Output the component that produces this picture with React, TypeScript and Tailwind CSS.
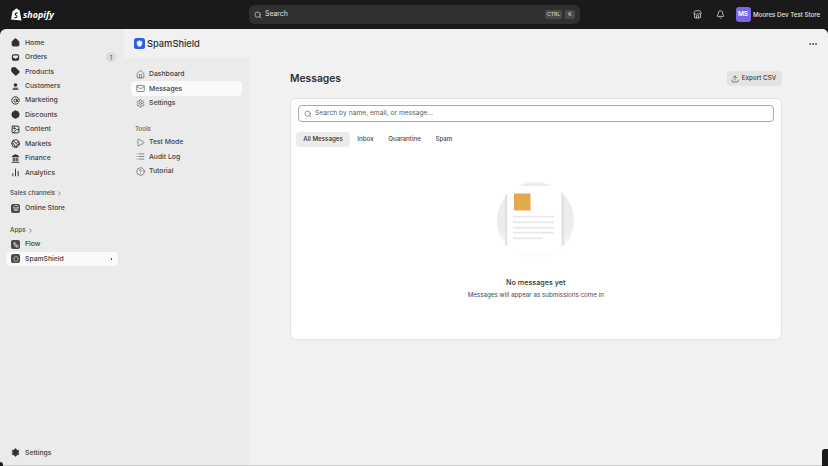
import {
  AtSign,
  BadgePercent,
  Bell,
  ChartNoAxesColumn,
  ChevronRight,
  CircleHelp,
  Earth,
  Ellipsis,
  Home,
  House,
  Image,
  Landmark,
  List,
  Mail,
  Play,
  Search,
  Settings,
  Shield,
  Store,
  Tag,
  Upload,
  Workflow,
  type LucideIcon,
} from "lucide-react";

function OrdersIcon({ className }: { className?: string }) {
  return (
    <svg viewBox="0 0 20 20" className={className}>
      <rect x="2" y="3" width="16" height="14" rx="3.5" fill="#303030" />
      <path d="M4.5 5.5h11v5h-3l-1 2h-3l-1-2h-3z" fill="#ebebeb" />
    </svg>
  );
}

function CustomersIcon({ className }: { className?: string }) {
  return (
    <svg viewBox="0 0 20 20" className={className}>
      <circle cx="10" cy="6.5" r="4" fill="#303030" />
      <path d="M5 12.5h10l1 2.5H4z" fill="#303030" />
      <rect x="3" y="16" width="14" height="2" rx="1" fill="#303030" />
    </svg>
  );
}

const mainNav: { label: string; icon: LucideIcon | typeof OrdersIcon; iconClass: string; badge?: string }[] = [
  { label: "Home", icon: Home, iconClass: "fill-[#303030] text-[#303030]" },
  { label: "Orders", icon: OrdersIcon, iconClass: "", badge: "1" },
  { label: "Products", icon: Tag, iconClass: "fill-[#303030] text-[#303030]" },
  { label: "Customers", icon: CustomersIcon, iconClass: "" },
  { label: "Marketing", icon: AtSign, iconClass: "text-[#303030]" },
  { label: "Discounts", icon: BadgePercent, iconClass: "fill-[#303030] text-[#303030]" },
  { label: "Content", icon: Image, iconClass: "text-[#303030]" },
  { label: "Markets", icon: Earth, iconClass: "text-[#303030]" },
  { label: "Finance", icon: Landmark, iconClass: "fill-[#303030] text-[#303030]" },
  { label: "Analytics", icon: ChartNoAxesColumn, iconClass: "text-[#303030]" },
];

const appNav: { label: string; icon: LucideIcon; active?: boolean }[] = [
  { label: "Dashboard", icon: House },
  { label: "Messages", icon: Mail, active: true },
  { label: "Settings", icon: Settings },
];

const toolNav: { label: string; icon: LucideIcon }[] = [
  { label: "Test Mode", icon: Play },
  { label: "Audit Log", icon: List },
  { label: "Tutorial", icon: CircleHelp },
];

const tabs = ["All Messages", "Inbox", "Quarantine", "Spam"];

function NavRow({ label, icon: Icon, iconClass, badge }: (typeof mainNav)[number]) {
  return (
    <div className="flex h-[14.45px] items-center pl-[5px] pr-[2px]">
      <Icon className={`h-[9px] w-[9px] shrink-0 ${iconClass}`} strokeWidth={2.6} />
      <span className="ml-[5px] flex-1 text-[6.8px] font-medium text-[#404040]">{label}</span>
      {badge && (
        <span className="flex h-[10px] w-[10px] items-center justify-center rounded-full bg-[#dcdcdc] text-[6px] text-[#4a4a4a]">
          {badge}
        </span>
      )}
    </div>
  );
}

function AppIconRow({ label, icon: Icon }: { label: string; icon: LucideIcon }) {
  return (
    <div className="flex h-[14.45px] items-center pl-[5px] pr-[2px]">
      <span className="flex h-[9px] w-[9px] shrink-0 items-center justify-center rounded-[2px] bg-[#4a4a4a]">
        <Icon className="h-[6px] w-[6px] text-[#ebebeb]" strokeWidth={2.5} />
      </span>
      <span className="ml-[5px] flex-1 text-[6.8px] font-medium text-[#404040]">{label}</span>
    </div>
  );
}

function SubNavRow({ label, icon: Icon, active }: { label: string; icon: LucideIcon; active?: boolean }) {
  return (
    <div className={`flex h-[14.45px] items-center rounded-[4px] pl-[5px] ${active ? "bg-[#fafafa]" : ""}`}>
      <Icon className="h-[9px] w-[9px] shrink-0 text-[#4a4a4a]" strokeWidth={1.6} />
      <span className="ml-[4px] text-[6.8px] font-medium text-[#404040]">{label}</span>
    </div>
  );
}

function ShopifyBag() {
  return (
    <svg width="12" height="13" viewBox="0 0 12 13" className="shrink-0">
      <path
        d="M1 11.5 2.6 3.2Q4 2.6 4.5 2 5.2.5 6.6.5 8 .5 8.4 2L9.5 2 11.5 12.5Z"
        fill="#ffffff"
      />
      <path
        d="M7.6 5Q5.5 4.6 5.2 6 5.2 7 6.2 7.4 7.2 8 6.8 9 6 10 4.5 9.4"
        fill="none"
        stroke="#1a1a1a"
        strokeWidth="1.1"
      />
    </svg>
  );
}

function EmptyIllustration() {
  return (
    <svg width="78" height="78" viewBox="0 0 78 78" className="block">
      <defs>
        <linearGradient id="circleFade" x1="0" y1="0" x2="0" y2="1">
          <stop offset="0.6" stopColor="#ececec" />
          <stop offset="1" stopColor="#ffffff" />
        </linearGradient>
      </defs>
      <circle cx="38.5" cy="38.5" r="38.5" fill="url(#circleFade)" />
      <rect x="8.5" y="12" width="1.5" height="52" fill="#dcdcdc" />
      <rect x="65" y="13" width="2" height="50" fill="#e0e0e0" />
      <rect x="10" y="4" width="54" height="66" fill="#ffffff" />
      <rect x="17" y="11.5" width="16.5" height="17" fill="#e4a94f" />
      <rect x="16" y="33.8" width="41" height="1.8" fill="#e8e8e8" />
      <rect x="16" y="39.4" width="41" height="1.8" fill="#e8e8e8" />
      <rect x="16" y="44.8" width="41" height="1.8" fill="#e8e8e8" />
      <rect x="16" y="49.8" width="41" height="1.8" fill="#e8e8e8" />
      <rect x="16" y="55.4" width="30" height="1.8" fill="#e8e8e8" />
    </svg>
  );
}

export default function App() {
  return (
    <div className="relative flex h-[466px] w-[828px] flex-col overflow-hidden bg-[#1a1a1a] font-['Inter',sans-serif]">
      {/* TOP BAR */}
      <header className="flex h-[29px] shrink-0 items-center">
        <div className="flex w-[249px] items-center pl-[10px]">
          <ShopifyBag />
          <span className="ml-[1px] font-['Open_Sans',sans-serif] text-[9px] font-bold italic text-white">shopify</span>
        </div>
        <div className="flex h-[19px] w-[331px] items-center rounded-[6px] bg-[#303030] pl-[5px] pr-[5px]">
          <Search className="h-[8px] w-[8px] text-[#e3e3e3]" strokeWidth={2} />
          <span className="ml-[3px] flex-1 text-[6.9px] text-[#e3e3e3]">Search</span>
          <span className="rounded-[2px] bg-[#4a4a4a] px-[2px] text-[5px] font-medium leading-[9px] text-[#d0d0d0]">CTRL</span>
          <span className="ml-[3px] w-[10px] rounded-[2px] bg-[#4a4a4a] text-center text-[5px] font-medium leading-[9px] text-[#d0d0d0]">K</span>
        </div>
        <div className="flex flex-1 items-center pl-[113px]">
          <Store className="h-[9px] w-[9px] text-[#e3e3e3]" strokeWidth={2} />
          <Bell className="ml-[14px] h-[9px] w-[9px] text-[#e3e3e3]" strokeWidth={2} />
          <span className="ml-[10.5px] flex h-[15px] w-[15px] items-center justify-center rounded-[3px] bg-[#7c66e8] text-[6.5px] font-semibold text-white">MS</span>
          <span className="ml-[2.5px] whitespace-nowrap text-[6.2px] font-medium text-[#e3e3e3]">Moores Dev Test Store</span>
        </div>
      </header>

      {/* BODY */}
      <div className="flex min-h-0 flex-1 overflow-hidden rounded-t-[6px] border-b border-[#c9c9c9] bg-[#ebebeb]">
        <nav className="flex w-[124px] shrink-0 flex-col px-[6px] pb-[5px] pt-[6.5px]">
          {mainNav.map((item) => (
            <NavRow key={item.label} {...item} />
          ))}
          <div className="mt-[7px] flex h-[14px] items-center pl-[4px] text-[6.3px] font-medium text-[#4a4a4a]">
            Sales channels
            <ChevronRight className="ml-[1px] h-[7px] w-[7px]" />
          </div>
          <AppIconRow label="Online Store" icon={Store} />
          <div className="mt-[8px] flex h-[14px] items-center pl-[4px] text-[6.3px] font-medium text-[#4a4a4a]">
            Apps
            <ChevronRight className="ml-[1px] h-[7px] w-[7px]" />
          </div>
          <AppIconRow label="Flow" icon={Workflow} />
          <div className="relative rounded-[4px] bg-[#fafafa]">
            <AppIconRow label="SpamShield" icon={Shield} />
            <span className="absolute right-[6px] top-[6.5px] h-[1.5px] w-[1.5px] rounded-full bg-[#303030]" />
          </div>
          <div className="mt-auto flex h-[14.45px] items-center pl-[5px]">
            <Settings className="h-[9px] w-[9px] fill-[#303030] text-[#303030]" strokeWidth={2} />
            <span className="ml-[5px] text-[6.8px] font-medium text-[#404040]">Settings</span>
          </div>
        </nav>

        <div className="flex min-w-0 flex-1 flex-col bg-[#f1f1f1]">
          {/* APP HEADER */}
          <div className="flex h-[29px] shrink-0 items-center pl-[10px] pr-[10px]">
            <span className="flex h-[11px] w-[11px] items-center justify-center rounded-[2.5px] bg-[#2f5be7]">
              <Shield className="h-[7px] w-[7px] fill-white text-white" />
            </span>
            <span className="ml-[2px] flex-1 text-[9.3px] font-medium text-[#303030]">SpamShield</span>
            <Ellipsis className="h-[10px] w-[10px] text-[#303030]" strokeWidth={2} />
          </div>

          <div className="flex min-h-0 flex-1">
            {/* APP SIDEBAR */}
            <aside className="w-[125px] shrink-0 bg-[#ebebeb] pl-[7px] pr-[7px] pt-[9px]">
              {appNav.map((item) => (
                <SubNavRow key={item.label} {...item} />
              ))}
              <div className="mt-[12px] flex h-[13px] items-center pl-[4px] text-[6.2px] font-medium text-[#616161]">Tools</div>
              {toolNav.map((item) => (
                <SubNavRow key={item.label} {...item} />
              ))}
            </aside>

            {/* MAIN */}
            <main className="flex-1 pl-[41px] pr-[46.5px] pt-[13px]">
              <div className="flex h-[15px] items-center justify-between">
                <h1 className="text-[10.3px] font-semibold text-[#303030]">Messages</h1>
                <button className="flex h-[15px] w-[55px] items-center justify-center rounded-[4px] bg-[#e3e3e3] pr-[1px] text-[6.3px] font-medium text-[#404040]">
                  <Upload className="mr-[3px] h-[8px] w-[8px]" strokeWidth={1.8} />
                  Export CSV
                </button>
              </div>

              <section className="mt-[12px] h-[242px] rounded-[6px] border border-[#e3e3e3] bg-white px-[7px] pt-[6px]">
                <div className="flex h-[17px] items-center rounded-[4px] border border-[#a8a8a8] px-[5px]">
                  <Search className="h-[8px] w-[8px] text-[#616161]" strokeWidth={2} />
                  <span className="ml-[3px] text-[6.7px] text-[#616161]">Search by name, email, or message...</span>
                </div>
                <div className="-ml-[2px] mt-[9.5px] flex">
                  {tabs.map((tab, i) => (
                    <span
                      key={tab}
                      className={`flex h-[15px] items-center rounded-[4px] px-[7.3px] text-[6.2px] font-medium ${
                        i === 0 ? "bg-[#ebebeb] text-[#303030]" : "text-[#4a4a4a]"
                      }`}
                    >
                      {tab}
                    </span>
                  ))}
                </div>
                <div className="mt-[35.5px] flex flex-col items-center">
                  <EmptyIllustration />
                  <p className="mt-[18px] text-[7.2px] font-medium text-[#303030]">No messages yet</p>
                  <p className="mt-[2.5px] text-[6.25px] text-[#4a4a4a]">Messages will appear as submissions come in</p>
                </div>
              </section>
            </main>
          </div>
        </div>
      </div>

      {/* window corners */}
      <span className="absolute bottom-0 right-0 h-[17px] w-[6px] rounded-tl-[3px] bg-[#1a1a1a]" />
      <span className="absolute bottom-0 left-0 h-[4px] w-[3px] rounded-tr-[3px] bg-[#1a1a1a]" />
    </div>
  );
}
